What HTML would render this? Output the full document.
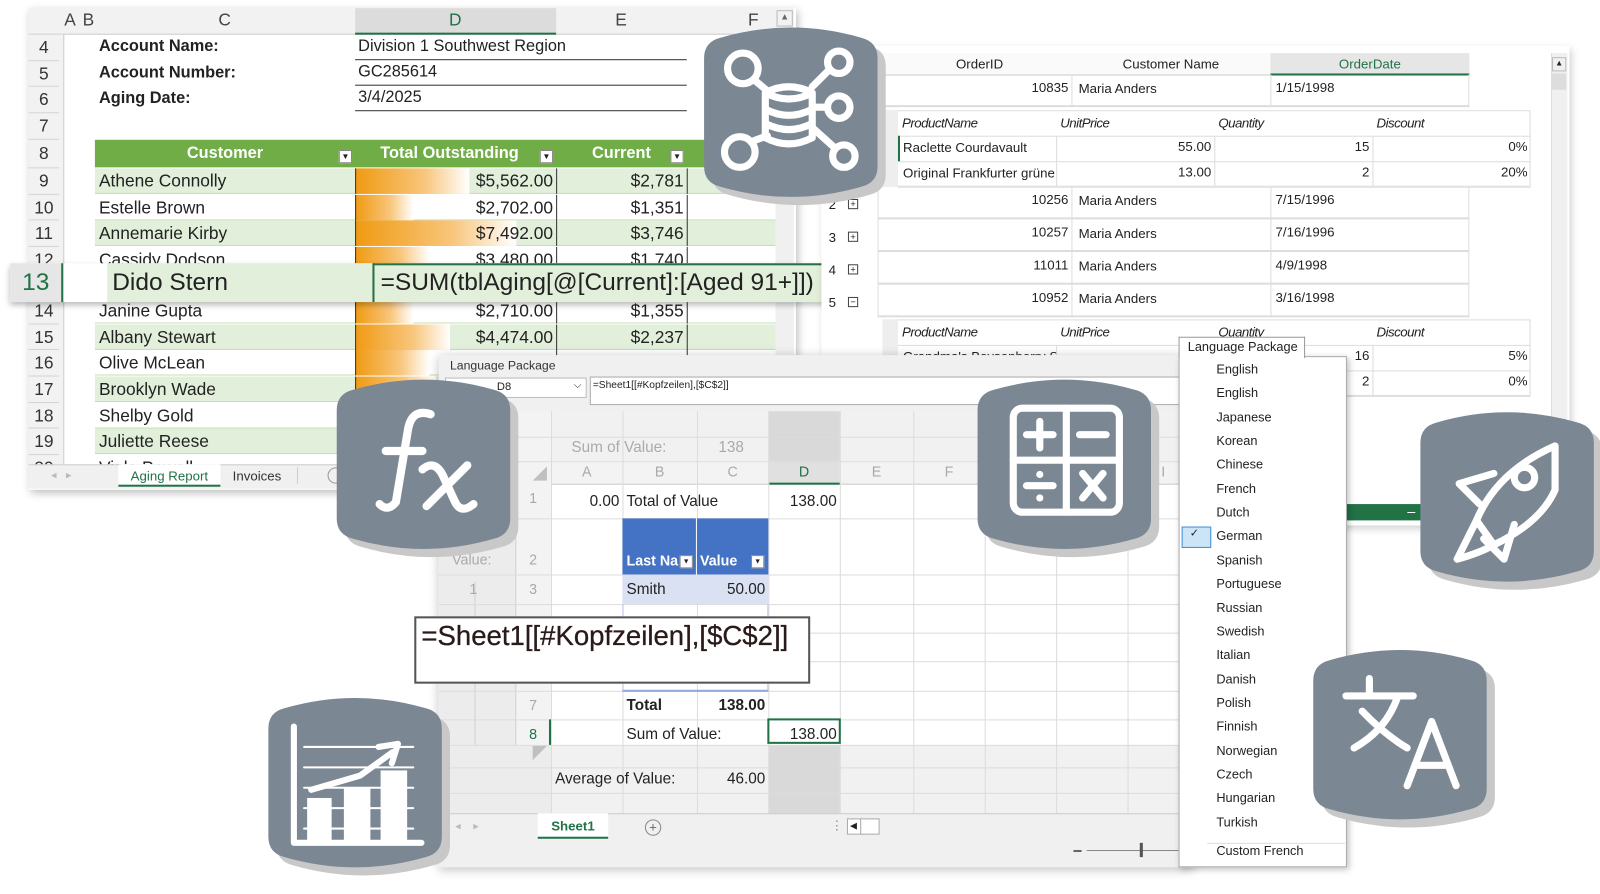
<!DOCTYPE html>
<html><head><meta charset="utf-8"><style>
*{margin:0;padding:0;box-sizing:border-box}
body{width:1600px;height:876px;background:#fff;position:relative;overflow:hidden;font-family:"Liberation Sans Narrow","Liberation Sans",sans-serif;color:#222}
#wrap{position:absolute;left:0;top:0;width:1568px;height:859px;transform:scale(1.0204);transform-origin:0 0}
.a{position:absolute;white-space:nowrap}
.hd{background:#f2f2f2}
.r{text-align:right}
.c{text-align:center}
</style></head><body><div id="wrap">

<!-- LEFT SHEET WINDOW -->
<div class="a" style="left:28px;top:8px;width:752px;height:472px;background:#fff;box-shadow:2px 3px 8px rgba(0,0,0,.25)"></div>
<div class="a hd" style="left:28px;top:8px;width:750px;height:26px;border-bottom:1px solid #ccc"></div>
<div class="a" style="left:348px;top:8px;width:197px;height:26px;background:#dcdcdc;border-bottom:2px solid #217346"></div>
<div class="a" style="left:63px;top:10px;font-size:17px;color:#444">A</div>
<div class="a" style="left:81px;top:10px;font-size:17px;color:#444">B</div>
<div class="a" style="left:214px;top:10px;font-size:17px;color:#444">C</div>
<div class="a" style="left:440px;top:10px;font-size:17px;color:#217346">D</div>
<div class="a" style="left:603px;top:10px;font-size:17px;color:#444">E</div>
<div class="a" style="left:733px;top:10px;font-size:17px;color:#444">F</div>
<div class="a" style="left:761px;top:10px;width:16px;height:16px;border:1px solid #bbb;font-size:9px;text-align:center;color:#666">▲</div>
<div class="a hd" style="left:28px;top:34px;width:35px;height:421px;border-right:1px solid #ccc"></div>
<div class="a" style="left:760px;top:34px;width:18px;height:421px;background:#f0f0f0"></div>
<div id="rownums"></div>
<div class="a" style="left:97px;top:37px;font-size:16px;font-weight:bold">Account Name:</div>
<div class="a" style="left:97px;top:63px;font-size:16px;font-weight:bold">Account Number:</div>
<div class="a" style="left:97px;top:88px;font-size:16px;font-weight:bold">Aging Date:</div>
<div class="a" style="left:348px;top:37px;width:325px;height:22px;border-bottom:1px solid #333;font-size:16px;padding-left:3px">Division 1 Southwest Region</div>
<div class="a" style="left:348px;top:62px;width:325px;height:22px;border-bottom:1px solid #333;font-size:16px;padding-left:3px">GC285614</div>
<div class="a" style="left:348px;top:87px;width:325px;height:22px;border-bottom:1px solid #333;font-size:16px;padding-left:3px">3/4/2025</div>
<div class="a" style="left:93px;top:137px;width:667px;height:27px;background:#70ad47"></div>
<div class="a c" style="left:93px;top:142px;width:255px;color:#fff;font-weight:bold;font-size:16px">Customer</div>
<div class="a c" style="left:348px;top:142px;width:185px;color:#fff;font-weight:bold;font-size:16px">Total Outstanding</div>
<div class="a c" style="left:545px;top:142px;width:128px;color:#fff;font-weight:bold;font-size:16px">Current</div>
<div class="a" style="left:332px;top:147px;width:13px;height:13px;background:#fff;border:1px solid #888;font-size:8px;text-align:center;line-height:12px">▼</div>
<div class="a" style="left:529px;top:147px;width:13px;height:13px;background:#fff;border:1px solid #888;font-size:8px;text-align:center;line-height:12px">▼</div>
<div class="a" style="left:657px;top:147px;width:13px;height:13px;background:#fff;border:1px solid #888;font-size:8px;text-align:center;line-height:12px">▼</div>
<div id="rows"></div>
<div class="a" style="left:28px;top:455px;width:750px;height:24px;background:#f0f0f0;border-top:1px solid #ccc"></div>
<div class="a" style="left:50px;top:459px;font-size:11px;color:#bbb">◂ &nbsp; ▸</div>
<div class="a c" style="left:116px;top:455px;width:100px;height:22px;background:#fff;border-bottom:2px solid #217346;font-size:13px;color:#217346;padding-top:4px">Aging Report</div>
<div class="a" style="left:228px;top:459px;font-size:13px;color:#333">Invoices</div>
<div class="a" style="left:291px;top:458px;width:1px;height:16px;background:#ccc"></div>
<div class="a" style="left:321px;top:458px;width:16px;height:16px;border:1px solid #999;border-radius:50%"></div>

<!-- ROW 13 overlay -->
<div class="a" style="left:10px;top:258px;width:805px;height:38px;background:#fff;box-shadow:0 3px 6px rgba(0,0,0,.3)"></div>
<div class="a" style="left:10px;top:258px;width:52px;height:38px;background:#e6e6e6;border-right:2px solid #217346;font-size:24px;color:#217346;text-align:center;padding-top:5px">13</div>
<div class="a" style="left:105px;top:258px;width:260px;height:38px;background:#e2efda;font-size:24px;padding:5px 0 0 5px">Dido Stern</div>
<div class="a" style="left:365px;top:258px;width:450px;height:38px;background:#e2efda;border-left:2px solid #217346;border-top:2px solid #217346;font-size:24px;padding:3px 0 0 6px">=SUM(tblAging[@[Current]:[Aged 91+]])</div>

<!-- RIGHT GRID WINDOW -->
<div class="a" style="left:805px;top:45px;width:733px;height:470px;background:#fff;box-shadow:2px 3px 8px rgba(0,0,0,.2)"></div>
<div class="a" style="left:1520px;top:52px;width:16px;height:455px;background:#f0f0f0;border-left:1px solid #ddd"></div>
<div class="a" style="left:1521px;top:56px;width:14px;height:14px;border:1px solid #bbb;font-size:8px;text-align:center">▲</div>
<div class="a" style="left:1521px;top:72px;width:14px;height:16px;background:#ddd"></div>
<div class="a" style="left:860px;top:52px;width:580px;height:22px;border-bottom:1px solid #ccc;background:#fafafa"></div>
<div class="a" style="left:1245px;top:52px;width:195px;height:22px;background:#e6e6e6;border-bottom:2px solid #217346"></div>
<div class="a c" style="left:870px;top:55px;width:180px;font-size:13px">OrderID</div>
<div class="a c" style="left:1050px;top:55px;width:195px;font-size:13px">Customer Name</div>
<div class="a c" style="left:1245px;top:55px;width:195px;font-size:13px;color:#217346">OrderDate</div>
<div id="rgrid"></div>

<!-- MIDDLE WINDOW -->
<div class="a" style="left:430px;top:348px;width:740px;height:502px;background:#f0f0f0;box-shadow:0 2px 10px rgba(0,0,0,.25)"></div>
<div class="a" style="left:441px;top:351px;font-size:12px;color:#333">Language Package</div>
<div class="a" style="left:436px;top:370px;width:139px;height:20px;background:#fff;border:1px solid #bbb;font-size:11px;padding:2px 0 0 50px">D8<span style="position:absolute;right:4px;top:1px;font-size:10px">⌵</span></div>
<div class="a" style="left:578px;top:369px;width:592px;height:28px;background:#fff;border:1px solid #aaa;font-size:10px;padding:2px">=Sheet1[[#Kopfzeilen],[$C$2]]</div>
<div class="a" style="left:430px;top:403px;width:740px;height:394px;background:#fff"></div>
<div id="mgrid"></div>
<div class="a" style="left:430px;top:797px;width:740px;height:26px;background:#f0f0f0;border-top:1px solid #ccc"></div>
<div class="a" style="left:446px;top:803px;font-size:11px;color:#bbb">◂ &nbsp;&nbsp; ▸</div>
<div class="a c" style="left:527px;top:797px;width:69px;height:25px;background:#fff;border-bottom:2px solid #217346;font-size:13px;font-weight:bold;color:#217346;padding-top:5px">Sheet1</div>
<div class="a" style="left:632px;top:803px;width:16px;height:16px;border:1px solid #888;border-radius:50%;font-size:13px;line-height:13px;text-align:center;color:#666">+</div>
<div class="a" style="left:814px;top:802px;font-size:12px;color:#888">⋮</div>
<div class="a" style="left:830px;top:802px;width:32px;height:16px;border:1px solid #aaa;background:#fff"></div>
<div class="a" style="left:830px;top:802px;width:14px;height:16px;border-right:1px solid #aaa;font-size:9px;text-align:center;line-height:15px">◀</div>
<div class="a" style="left:1052px;top:833px;width:8px;height:2px;background:#666"></div>
<div class="a" style="left:1065px;top:833px;width:95px;height:1px;background:#888"></div>
<div class="a" style="left:1117px;top:826px;width:3px;height:14px;background:#555"></div>

<!-- callout -->
<div class="a" style="left:406px;top:604px;width:388px;height:66px;background:#fff;border:2px solid #555;font-size:27px;padding:2px 0 0 5px;color:#2a1a1a;-webkit-text-stroke:.3px #2a1a1a">=Sheet1[[#Kopfzeilen],[$C$2]]</div>

<div class="a" style="left:1320px;top:494px;width:75px;height:16px;background:#217346;color:#fff;font-size:14px;text-align:right;padding-right:8px;line-height:14px">–</div>

<!-- DROPDOWN -->
<div class="a" style="left:1155px;top:349px;width:165px;height:501px;background:#fff;border:1px solid #aaa;box-shadow:2px 2px 6px rgba(0,0,0,.25)"></div>
<div class="a" style="left:1155px;top:330px;width:124px;height:21px;background:#fff;border:1px solid #999;border-bottom:none;font-size:12.5px;padding:2px 0 0 8px">Language Package</div>
<div class="a" style="left:1158px;top:516px;width:29px;height:21px;background:#cce4f7;border:1px solid #3d8fd8;font-size:11px;padding-left:7px;line-height:12px">✓</div>
<div class="a" style="left:1183px;top:826px;width:135px;height:1px;background:#ddd"></div>
<div id="dd"></div>

<!-- BADGES -->
<svg class="a" style="left:0;top:0" width="1600" height="876" viewBox="0 0 1600 876">
<defs>
<path id="bd" d="M0,32 Q0,16 16,12 Q85,-8 154,12 Q170,16 170,32 L170,138 Q170,154 154,158 Q85,178 16,158 Q0,154 0,138 Z"/>
</defs>
<g fill="none" stroke="#fff" stroke-linecap="round" stroke-linejoin="round">
<g transform="translate(690,25)">
<use href="#bd" x="8" y="8" fill="#c8c8c8" stroke="none"/><use href="#bd" fill="#7b8893" stroke="none"/>
<g stroke-width="7">
<circle cx="38" cy="42" r="15"/><circle cx="35" cy="124" r="15"/><circle cx="132" cy="36" r="11"/><circle cx="132" cy="80" r="11"/><circle cx="137" cy="128" r="11"/>
<path d="M50,54 L62,64 M121,45 L106,60 M108,80 L121,80 M106,100 L126,118 M62,108 L46,114"/>
<path d="M60,66 Q83,54 106,66 L106,110 Q83,122 60,110 Z M60,66 Q83,78 106,66 M60,82 Q83,94 106,82 M60,96 Q83,108 106,96"/>
</g></g>
<g transform="translate(330,370)">
<use href="#bd" x="8" y="8" fill="#c8c8c8" stroke="none"/><use href="#bd" fill="#7b8893" stroke="none"/>
<g stroke-width="8">
<path d="M42,124 Q50,132 58,122 L70,50 Q74,30 92,36"/>
<path d="M48,72 L84,72"/>
<path d="M84,90 Q96,80 104,96 L116,122 Q122,134 134,124"/>
<path d="M88,126 L128,86"/>
</g></g>
<g transform="translate(958,370)">
<use href="#bd" x="8" y="8" fill="#c8c8c8" stroke="none"/><use href="#bd" fill="#7b8893" stroke="none"/>
<g stroke-width="7">
<rect x="35" y="30" width="104" height="102" rx="9"/>
<path d="M87,30 L87,132 M35,81 L139,81"/>
<path d="M48,56 L74,56 M61,43 L61,69 M100,56 L126,56 M48,106 L74,106 M103,94 L123,118 M123,94 L103,118"/>
</g>
<circle cx="61" cy="95" r="3.5" fill="#fff" stroke="none"/><circle cx="61" cy="118" r="3.5" fill="#fff" stroke="none"/>
</g>
<g transform="translate(1392,402)">
<use href="#bd" x="8" y="8" fill="#c8c8c8" stroke="none"/><use href="#bd" fill="#7b8893" stroke="none"/>
<g stroke-width="7">
<path d="M132,35 L132,78 Q118,110 72,132 L55,108 Q75,60 132,35 Z"/>
<circle cx="102" cy="66" r="10"/>
<path d="M58,92 L38,72 L72,62 M62,126 L82,146 L92,112 M55,108 L36,146 Q58,140 72,132"/>
</g></g>
<g transform="translate(1287,635)">
<use href="#bd" x="8" y="8" fill="#c8c8c8" stroke="none"/><use href="#bd" fill="#7b8893" stroke="none"/>
<g stroke-width="7">
<path d="M55,30 L55,47 M32,47 L98,47 M83,47 Q72,80 40,98 M48,62 Q70,85 92,98"/>
<path d="M92,135 L116,72 L140,135 M100,115 L132,115"/>
</g></g>
<g transform="translate(263,682)">
<use href="#bd" x="8" y="8" fill="#c8c8c8" stroke="none"/><use href="#bd" fill="#7b8893" stroke="none"/>
<g stroke-width="6"><path d="M25,30 L25,144 L150,144"/></g>
<g stroke-width="2"><path d="M35,50 L142,50 M35,70 L142,70 M35,90 L142,90 M35,110 L142,110 M35,130 L142,130"/></g>
<g fill="#fff" stroke="none"><rect x="38" y="100" width="24" height="42"/><rect x="74" y="90" width="26" height="52"/><rect x="110" y="73" width="26" height="69"/></g>
<path d="M42,92 L90,78 L122,55" stroke-width="6"/>
<path d="M108,50 L127,47 L121,66" stroke-width="6"/>
</g>
</g>
</svg>
</div>
<script>
function add(id,h){document.getElementById(id).insertAdjacentHTML('beforeend',h)}
var ry=[[4,34,60],[5,60,85],[6,85,111],[7,111,137],[8,137,165],[9,165,191],[10,191,216],[11,216,242],[12,242,268],[14,292,318],[15,318,343],[16,343,369],[17,369,395],[18,395,420],[19,420,446],[20,446,472]];
ry.forEach(function(r){add('rownums','<div class="a c" style="left:28px;top:'+r[1]+'px;width:30px;height:'+(r[2]-r[1])+'px;font-size:17px;color:#333;border-bottom:1px solid #d4d4d4;padding-top:'+((r[2]-r[1])/2-10)+'px">'+r[0]+'</div>')});
var data=[[9,165,'Athene Connolly','$5,562.00','$2,781',.57,1],[10,191,'Estelle Brown','$2,702.00','$1,351',.29,0],[11,216,'Annemarie Kirby','$7,492.00','$3,746',.8,1],[12,242,'Cassidy Dodson','$3,480.00','$1,740',.37,0],[14,292,'Janine Gupta','$2,710.00','$1,355',.29,0],[15,318,'Albany Stewart','$4,474.00','$2,237',.47,1],[16,343,'Olive McLean','$3,562.00','$1,781',.37,0],[17,369,'Brooklyn Wade','$4,210.00','$2,105',.4,1],[18,395,'Shelby Gold','$3,100.00','$1,550',.3,0],[19,420,'Juliette Reese','$4,800.00','$2,400',.5,1],[20,446,'Viola Powell','','',.3,0]];
data.forEach(function(d){var y=d[1],bg=d[6]?'#e2efda':'#fff',h=25;
add('rows','<div class="a" style="left:93px;top:'+y+'px;width:667px;height:'+h+'px;background:'+bg+';border-bottom:1px solid #c6dfb4"></div>'+
'<div class="a" style="left:348px;top:'+y+'px;width:'+(197*d[5])+'px;height:'+h+'px;background:linear-gradient(to right,#f09a12,#f8c57a 60%,#fff)"></div>'+
'<div class="a" style="left:348px;top:'+y+'px;width:1px;height:'+h+'px;background:#333"></div><div class="a" style="left:545px;top:'+y+'px;width:1px;height:'+h+'px;background:#333"></div><div class="a" style="left:673px;top:'+y+'px;width:1px;height:'+h+'px;background:#333"></div>'+
'<div class="a" style="left:97px;top:'+(y+3)+'px;font-size:17px">'+d[2]+'</div>'+
'<div class="a r" style="left:348px;top:'+(y+3)+'px;width:194px;font-size:17px">'+d[3]+'</div>'+
'<div class="a r" style="left:545px;top:'+(y+3)+'px;width:125px;font-size:17px">'+d[4]+'</div>')});
function mrow(y,n,id,nm,dt,exp){var h=32;
add('rgrid','<div class="a" style="left:860px;top:'+y+'px;width:580px;height:'+h+'px;border-bottom:2px solid #ddd;border-left:1px solid #ddd"></div><div class="a" style="left:1050px;top:'+y+'px;width:1px;height:'+h+'px;background:#ddd"></div><div class="a" style="left:1245px;top:'+y+'px;width:1px;height:'+h+'px;background:#ddd"></div><div class="a" style="left:1439px;top:'+y+'px;width:1px;height:'+h+'px;background:#ddd"></div>'+
'<div class="a r" style="left:870px;top:'+(y+5)+'px;width:180px;font-size:13px;padding-right:3px">'+id+'</div><div class="a" style="left:1057px;top:'+(y+6)+'px;font-size:13px">'+nm+'</div><div class="a" style="left:1250px;top:'+(y+5)+'px;font-size:13px">'+dt+'</div>'+
(n?'<div class="a" style="left:812px;top:'+(y+10)+'px;font-size:13px">'+n+'</div><div class="a" style="left:831px;top:'+(y+12)+'px;width:10px;height:10px;border:1px solid #444;font-size:9px;line-height:8px;text-align:center">'+exp+'</div>':''))}
mrow(73,'','10835','Maria Anders','1/15/1998');
mrow(183,'2','10256','Maria Anders','7/15/1996','+');
mrow(215,'3','10257','Maria Anders','7/16/1996','+');
mrow(247,'4','11011','Maria Anders','4/9/1998','+');
mrow(279,'5','10952','Maria Anders','3/16/1998','−');
function det(y,rows){add('rgrid','<div class="a" style="left:865px;top:'+y+'px;width:635px;height:'+(25+rows.length*25)+'px;border:1px solid #ddd"></div><div class="a" style="left:865px;top:'+y+'px;width:15px;height:'+(25+rows.length*25)+'px;background:#eee"></div>');
var cols=[880,1035,1190,1345,1500],hd=['ProductName','UnitPrice','Quantity','Discount'];
hd.forEach(function(t,i){add('rgrid','<div class="a" style="left:'+(cols[i]+4)+'px;top:'+(y+5)+'px;font-size:13px;font-style:italic;font-family:\'Liberation Sans\',sans-serif;letter-spacing:-.5px">'+t+'</div>')});
add('rgrid','<div class="a" style="left:880px;top:'+(y+25)+'px;width:620px;height:1px;background:#ddd"></div>');
rows.forEach(function(r,j){var yy=y+25+j*25;add('rgrid','<div class="a" style="left:880px;top:'+(yy+25)+'px;width:620px;height:1px;background:#ddd"></div>');
cols.slice(1,4).forEach(function(c){add('rgrid','<div class="a" style="left:'+c+'px;top:'+yy+'px;width:1px;height:25px;background:#ddd"></div>')});
add('rgrid','<div class="a" style="left:885px;top:'+(yy+4)+'px;font-size:13px;width:150px;overflow:hidden">'+r[0]+'</div><div class="a r" style="left:1035px;top:'+(yy+3)+'px;width:152px;font-size:13px">'+r[1]+'</div><div class="a r" style="left:1190px;top:'+(yy+3)+'px;width:152px;font-size:13px">'+r[2]+'</div><div class="a r" style="left:1345px;top:'+(yy+3)+'px;width:152px;font-size:13px">'+r[3]+'</div>')})}
det(108,[['Raclette Courdavault','55.00','15','0%'],['Original Frankfurter grüne Soße','13.00','2','20%']]);
det(313,[["Grandma's Boysenberry Spread",'','16','5%'],['','','2','0%']]);
add('rgrid','<div class="a" style="left:880px;top:133px;width:2px;height:25px;background:#217346"></div>');
var cx=[540,610,683,753,823,895,965,1035,1105,1175];
var rws=[[405,428],[428,452],[475,508],[508,563],[563,592],[592,620],[620,648],[648,677],[677,705],[705,730],[730,752],[752,777],[777,797]];
add('mgrid','<div class="a" style="left:430px;top:403px;width:110px;height:394px;background:#ececec"></div><div class="a" style="left:505px;top:403px;width:35px;height:327px;background:#f3f3f3"></div><div class="a" style="left:540px;top:403px;width:630px;height:49px;background:#f1f1f1"></div><div class="a" style="left:540px;top:730px;width:630px;height:67px;background:#f1f1f1"></div><div class="a" style="left:753px;top:403px;width:70px;height:72px;background:#d9d9d9"></div><div class="a" style="left:753px;top:730px;width:70px;height:67px;background:#d9d9d9"></div><div class="a" style="left:540px;top:452px;width:630px;height:23px;background:#f3f3f3;border-bottom:1px solid #ccc"></div><div class="a" style="left:753px;top:452px;width:70px;height:23px;background:#e0e0e0;border-bottom:2px solid #217346"></div>');
cx.forEach(function(x){add('mgrid','<div class="a" style="left:'+x+'px;top:403px;width:1px;height:394px;background:#dcdcdc"></div>')});
add('mgrid','<div class="a" style="left:465px;top:570px;width:1px;height:160px;background:#d0d0d0"></div><div class="a" style="left:505px;top:403px;width:1px;height:327px;background:#d0d0d0"></div>');
rws.forEach(function(r){add('mgrid','<div class="a" style="left:430px;top:'+r[1]+'px;width:740px;height:1px;background:#dcdcdc"></div>')});
var L=['A','B','C','D','E','F','','','I'];L.forEach(function(t,i){add('mgrid','<div class="a c" style="left:'+cx[i]+'px;top:454px;width:'+(cx[i+1]-cx[i])+'px;font-size:14px;color:'+(t=='D'?'#217346':'#aaa')+'">'+t+'</div>')});
add('mgrid','<div class="a" style="left:522px;top:457px;width:0;height:0;border-left:14px solid transparent;border-bottom:14px solid #c0c0c0"></div><div class="a" style="left:522px;top:731px;width:0;height:0;border-right:14px solid transparent;border-top:14px solid #c0c0c0"></div>');
[['1',480],['2',540],['3',569],['7',683],['8',711]].forEach(function(r){add('mgrid','<div class="a c" style="left:505px;top:'+r[1]+'px;width:35px;font-size:14px;color:'+(r[0]=='8'?'#217346':'#aaa')+'">'+r[0]+'</div>')});
add('mgrid','<div class="a" style="left:538px;top:705px;width:2px;height:25px;background:#217346"></div>');
add('mgrid','<div class="a" style="left:560px;top:430px;font-size:15px;color:#aaa">Sum of Value:</div><div class="a" style="left:704px;top:430px;font-size:15px;color:#aaa">138</div><div class="a" style="left:443px;top:540px;font-size:14px;color:#aaa">Value:</div><div class="a" style="left:460px;top:569px;font-size:14px;color:#aaa">1</div>');
add('mgrid','<div class="a" style="left:610px;top:508px;width:143px;height:55px;background:#4472c4"></div><div class="a" style="left:682px;top:508px;width:1px;height:55px;background:#fff"></div><div class="a" style="left:614px;top:541px;font-size:14px;font-weight:bold;color:#fff">Last Na</div><div class="a" style="left:686px;top:541px;font-size:14px;font-weight:bold;color:#fff">Value</div><div class="a" style="left:666px;top:544px;width:13px;height:13px;background:#fff;border:1px solid #888;font-size:7px;text-align:center;line-height:12px">▼</div><div class="a" style="left:736px;top:544px;width:13px;height:13px;background:#fff;border:1px solid #888;font-size:7px;text-align:center;line-height:12px">▼</div>');
add('mgrid','<div class="a" style="left:610px;top:563px;width:143px;height:29px;background:#d9e1f2"></div><div class="a" style="left:614px;top:569px;font-size:15px">Smith</div><div class="a r" style="left:683px;top:569px;width:67px;font-size:15px">50.00</div><div class="a" style="left:610px;top:592px;width:143px;height:85px;border-left:1px solid #b4c6e7;border-right:1px solid #b4c6e7"></div><div class="a" style="left:610px;top:676px;width:143px;height:2px;background:#8ea9db"></div>');
add('mgrid','<div class="a" style="left:614px;top:683px;font-size:15px;font-weight:bold">Total</div><div class="a r" style="left:683px;top:683px;width:67px;font-size:15px;font-weight:bold">138.00</div>');
add('mgrid','<div class="a r" style="left:540px;top:483px;width:67px;font-size:15px">0.00</div><div class="a" style="left:614px;top:483px;font-size:15px">Total of Value</div><div class="a r" style="left:753px;top:483px;width:67px;font-size:15px">138.00</div>');
add('mgrid','<div class="a" style="left:614px;top:711px;font-size:15px">Sum of Value:</div><div class="a r" style="left:752px;top:704px;width:72px;height:25px;border:2px solid #217346;font-size:15px;padding:5px 2px 0 0">138.00</div>');
add('mgrid','<div class="a" style="left:544px;top:755px;font-size:15px">Average of Value:</div><div class="a r" style="left:683px;top:755px;width:67px;font-size:15px">46.00</div>');
var langs=['English','English','Japanese','Korean','Chinese','French','Dutch','German','Spanish','Portuguese','Russian','Swedish','Italian','Danish','Polish','Finnish','Norwegian','Czech','Hungarian','Turkish'];
langs.forEach(function(t,i){add('dd','<div class="a" style="left:1192px;top:'+(355+i*23.35)+'px;font-size:12.5px;font-family:\'Liberation Sans\',sans-serif">'+t+'</div>')});
add('dd','<div class="a" style="left:1192px;top:827px;font-size:12.5px;font-family:\'Liberation Sans\',sans-serif">Custom French</div>');
</script>
</body></html>
